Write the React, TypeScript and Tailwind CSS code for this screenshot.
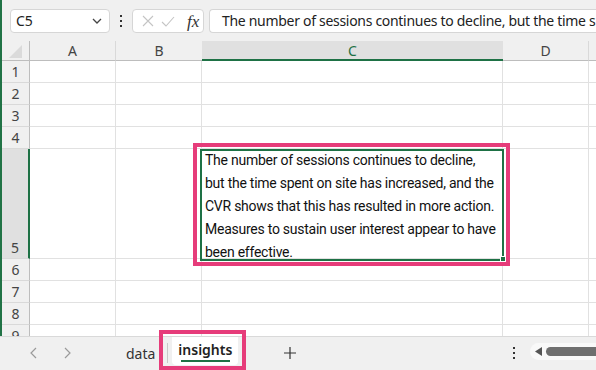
import React from 'react';

const uiFont = "font-['Noto_Sans','Liberation_Sans',sans-serif]";

const ChevronDown = () => (
  <svg width="10" height="6" viewBox="0 0 10 6" fill="none">
    <path d="M1 1l4 4 4-4" stroke="#444" strokeWidth="1.3" />
  </svg>
);

const VDots = ({ color = '#333' }: { color?: string }) => (
  <div className="flex flex-col gap-[3px]">
    <span className="w-[2px] h-[2px]" style={{ background: color }} />
    <span className="w-[2px] h-[2px]" style={{ background: color }} />
    <span className="w-[2px] h-[2px]" style={{ background: color }} />
  </div>
);

const FormulaBar: React.FC = () => (
  <div className={`h-[41px] flex items-start pt-[9px] pl-[8px] shrink-0 ${uiFont}`}>
    <div className="w-[100px] h-[24px] bg-white border border-[#d6d6d6] rounded-[4px] flex items-center pl-[5px] pr-[7px] justify-between">
      <span className="text-[14px] text-[#222] leading-none">C5</span>
      <ChevronDown />
    </div>
    <div className="w-[22px] h-[24px] flex items-center justify-center">
      <VDots />
    </div>
    <div className="w-[72px] h-[24px] bg-white border border-[#d6d6d6] rounded-[4px] flex items-center pl-[9px] gap-[7px]">
      <svg width="12" height="12" viewBox="0 0 12 12" fill="none">
        <path d="M1 1l10 10M11 1L1 11" stroke="#c4c4c4" strokeWidth="1.1" />
      </svg>
      <svg width="14" height="11" viewBox="0 0 14 11" fill="none">
        <path d="M1 6l4 4 8-9" stroke="#c4c4c4" strokeWidth="1.1" />
      </svg>
      <span className="font-['Liberation_Serif',serif] italic text-[17px] leading-none text-[#333] ml-[5px]">fx</span>
    </div>
    <div className="ml-[5px] flex-1 h-[24px] bg-white border border-r-0 border-[#d6d6d6] rounded-l-[4px] flex items-center pl-[12px] overflow-hidden whitespace-nowrap">
      <span className="text-[14px] text-[#222] leading-none tracking-[-0.3px]">
        The number of sessions continues to decline, but the time spent on site has increased
      </span>
    </div>
  </div>
);

const HeaderRow: React.FC = () => (
  <div className={`h-[20px] flex shrink-0 text-[14px] text-[#444] ${uiFont}`}>
    <div className="w-[28px] border-r border-b border-[#bdbdbd] flex items-end justify-center pb-[2px]">
      <svg width="13" height="13" viewBox="0 0 13 13">
        <path d="M13 0V13H0Z" fill="#dadada" />
      </svg>
    </div>
    <div className="w-[86px] border-r border-r-[#d9d9d9] border-b border-b-[#bdbdbd] flex items-center justify-center">A</div>
    <div className="w-[86px] border-b border-[#bdbdbd] flex items-center justify-center">B</div>
    <div className="w-[301px] bg-[#e0e0e0] border-b-2 border-[#1e7145] flex items-center justify-center text-[#1e7145]">C</div>
    <div className="w-[86px] border-r border-r-[#d9d9d9] border-b border-b-[#bdbdbd] flex items-center justify-center">D</div>
    <div className="flex-1 border-b border-[#bdbdbd]" />
  </div>
);

const Row = ({ n, h, active }: { n: number; h: string; active?: boolean }) => (
  <div className={`flex shrink-0 ${h}`}>
    <div
      className={`w-[28px] border-b border-b-[#d9d9d9] flex justify-center text-[14px] text-[#444] ${uiFont} ${
        active ? 'bg-[#e0e0e0] border-r-2 border-r-[#1e7145] items-end pb-0' : 'border-r border-r-[#bdbdbd] items-center'
      }`}
    >
      {n}
    </div>
    <div className="w-[86px] bg-white border-r border-b border-[#e1e1e1]" />
    <div className="w-[86px] bg-white border-r border-b border-[#e1e1e1]" />
    <div className="w-[301px] bg-white border-r border-b border-[#e1e1e1]">
      {active && (
        <div className="pl-[3px] font-['Roboto',sans-serif] text-[14px] leading-[23px] text-[#111] whitespace-nowrap tracking-[-0.25px]">
          <div>The number of sessions continues to decline,</div>
          <div>but the time spent on site has increased, and the</div>
          <div>CVR shows that this has resulted in more action.</div>
          <div>Measures to sustain user interest appear to have</div>
          <div>been effective.</div>
        </div>
      )}
    </div>
    <div className="w-[86px] bg-white border-r border-b border-[#e1e1e1]" />
    <div className="flex-1 bg-white border-b border-[#e1e1e1]" />
  </div>
);

const TabBar: React.FC = () => (
  <div className={`h-[34px] shrink-0 border-t border-[#d9d9d9] bg-[#f0f0f0] flex items-start ${uiFont}`}>
    <div className="w-[110px] h-[32px] flex items-center pl-[29px] gap-[27px]">
      <svg width="8" height="12" viewBox="0 0 8 12" fill="none">
        <path d="M7 1L2 6l5 5" stroke="#9a9a9a" strokeWidth="1.2" />
      </svg>
      <svg width="8" height="12" viewBox="0 0 8 12" fill="none">
        <path d="M1 1l5 5-5 5" stroke="#9a9a9a" strokeWidth="1.2" />
      </svg>
    </div>
    <div className="h-[32px] flex items-center pl-[16px] text-[14px] text-[#333]">data</div>
    <div className="h-[32px] flex items-center pl-[12px]">
      <div className="w-px h-[20px] bg-[#c8c8c8]" />
    </div>
    <div className="ml-[4px] w-[66px] h-[28px] bg-white rounded-b-[4px] flex flex-col items-center pt-[4px]">
      <span className="text-[14px] font-semibold text-[#222] leading-[18px]">insights</span>
      <span className="mt-[1px] w-[49px] h-[2px] bg-[#1e7145]" />
    </div>
    <div className="h-[32px] flex items-center pl-[46px]">
      <svg width="12" height="12" viewBox="0 0 12 12" fill="none">
        <path d="M6 0v12M0 6h12" stroke="#333" strokeWidth="1.2" />
      </svg>
    </div>
    <div className="flex-1" />
    <div className="h-[32px] flex items-center pr-[15px]">
      <VDots color="#333" />
    </div>
    <div className="mt-[6px] w-[66px] h-[17px] bg-[#f9f9f9] rounded-l-full flex items-center pl-[5px] gap-[4px]">
      <svg width="7" height="9" viewBox="0 0 7 9">
        <path d="M7 0v9L0 4.5Z" fill="#555" />
      </svg>
      <div className="flex-1 h-[9px] bg-[#6f6f6f] rounded-l-full" />
    </div>
  </div>
);

export default function App() {
  return (
    <div className="relative w-[596px] h-[370px] overflow-hidden bg-[#f0f0f0] flex flex-col">
      <div className="flex-1 flex flex-col border-l-2 border-[#217346] overflow-hidden">
        <FormulaBar />
        <HeaderRow />
        <Row n={1} h="h-[22px]" />
        <Row n={2} h="h-[22px]" />
        <Row n={3} h="h-[22px]" />
        <Row n={4} h="h-[22px]" />
        <Row n={5} h="h-[110px]" active />
        <Row n={6} h="h-[22px]" />
        <Row n={7} h="h-[22px]" />
        <Row n={8} h="h-[22px]" />
        <Row n={9} h="h-[22px]" />
      </div>
      <TabBar />

      {/* selected cell outline */}
      <div className="absolute left-[200px] top-[149px] w-[304px] h-[112px] border-2 border-[#1e7145] pointer-events-none" />
      <div className="absolute left-[500px] top-[256px] w-[6px] h-[6px] bg-[#1e7145] border border-white" />

      {/* annotation boxes */}
      <div className="absolute left-[193px] top-[143px] w-[317px] h-[123px] border-4 border-[#e63c7a] pointer-events-none" />
      <div className="absolute left-[159px] top-[330px] w-[87px] h-[40px] border-4 border-[#e63c7a] pointer-events-none" />
    </div>
  );
}
